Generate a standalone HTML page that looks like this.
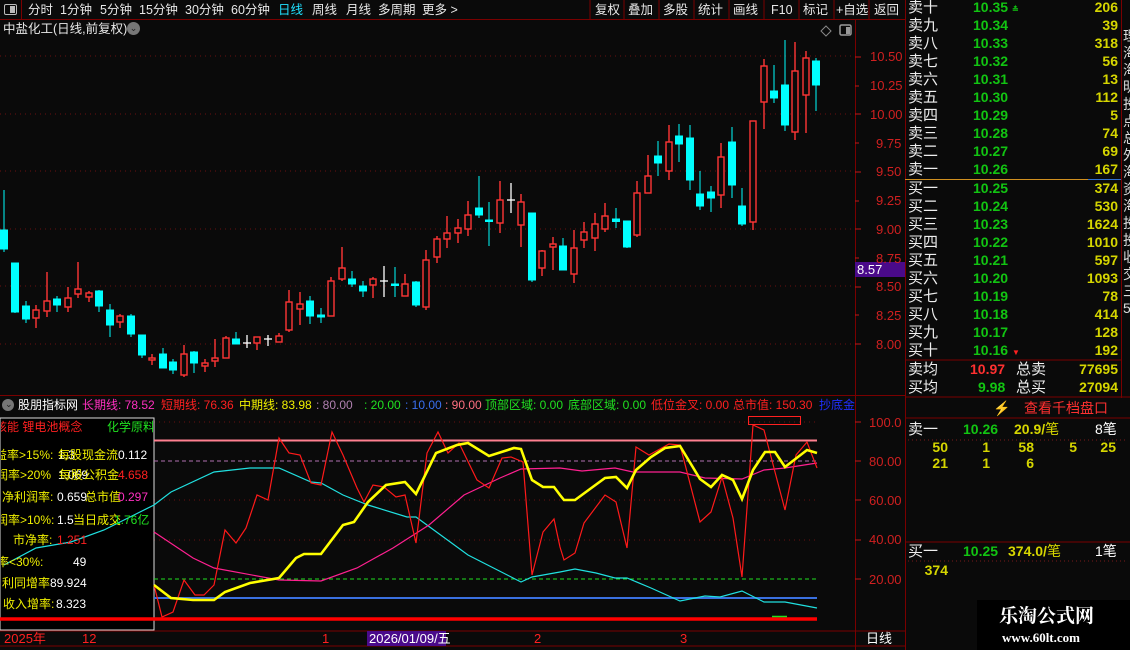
<!DOCTYPE html>
<html><head><meta charset="utf-8"><style>
*{margin:0;padding:0;box-sizing:border-box}
body{width:1130px;height:650px;background:#0a0a0a;overflow:hidden;position:relative;font-family:"Liberation Sans","WenQuanYi Zen Hei","Noto Sans CJK SC",sans-serif;font-size:12px;color:#e8e8e8}
.a{position:absolute;white-space:nowrap;line-height:15px}
.ob{font-size:15px;color:#eee}
.pr{font-weight:bold;color:#12c412;font-size:14px}
.vo{font-weight:bold;color:#d6d600;font-size:14px;text-align:right;width:60px}
.y{color:#f0f000}.w{color:#fff}.r{color:#ff2020}.g{color:#20e020}.m{color:#ff30c0}
.tb{top:3px;font-size:12.5px}
</style></head><body>
<!-- toolbar -->
<div class="a" style="left:0;top:0;width:22px;height:19px;border-right:1px solid #7a0000"></div>
<div class="a" style="left:4px;top:4px;width:13px;height:11px;border:1.5px solid #bbb;border-radius:2px"></div>
<div class="a" style="left:10px;top:6px;width:5px;height:7px;background:#bbb"></div>
<div class="a" style="left:0;top:19px;width:905px;height:1px;background:#7a0000"></div>
<div class="a tb" style="left:28px">分时</div>
<div class="a tb" style="left:60px">1分钟</div>
<div class="a tb" style="left:100px">5分钟</div>
<div class="a tb" style="left:139px">15分钟</div>
<div class="a tb" style="left:185px">30分钟</div>
<div class="a tb" style="left:231px">60分钟</div>
<div class="a tb" style="left:278px;color:#20e0ff">日线</div>
<div class="a tb" style="left:312px">周线</div>
<div class="a tb" style="left:346px">月线</div>
<div class="a tb" style="left:378px">多周期</div>
<div class="a tb" style="left:422px">更多 &gt;</div>
<div class="a tb" style="left:595px">复权</div>
<div class="a tb" style="left:628px">叠加</div>
<div class="a tb" style="left:663px">多股</div>
<div class="a tb" style="left:698px">统计</div>
<div class="a tb" style="left:733px">画线</div>
<div class="a tb" style="left:771px">F10</div>
<div class="a tb" style="left:803px">标记</div>
<div class="a tb" style="left:836px">+自选</div>
<div class="a tb" style="left:874px">返回</div>
<div class="a" style="left:3px;top:22px;font-size:12.5px">中盐化工(日线,前复权)</div>
<div class="a" style="left:127px;top:22px;width:13px;height:13px;border-radius:50%;background:#777;color:#222;font-size:9px;text-align:center;line-height:13px">⌄</div>
<div class="a" style="left:0;top:395px;width:905px;height:1px;background:#7a0000"></div>

<svg class="a" style="left:0;top:0" width="1130" height="650">
<g stroke="#7a0000" stroke-width="1">
<line x1="590" y1="0" x2="590" y2="19"/><line x1="624" y1="0" x2="624" y2="19"/><line x1="659" y1="0" x2="659" y2="19"/><line x1="694" y1="0" x2="694" y2="19"/><line x1="729" y1="0" x2="729" y2="19"/><line x1="764" y1="0" x2="764" y2="19"/><line x1="799" y1="0" x2="799" y2="19"/><line x1="834" y1="0" x2="834" y2="19"/><line x1="869" y1="0" x2="869" y2="19"/>
<line x1="855.5" y1="20" x2="855.5" y2="650"/><line x1="905.5" y1="0" x2="905.5" y2="650"/><line x1="1121.5" y1="0" x2="1121.5" y2="398"/>
<line x1="0" y1="631" x2="905" y2="631"/><line x1="0" y1="646" x2="905" y2="646"/>
<line x1="905" y1="360" x2="1121" y2="360"/><line x1="905" y1="397" x2="1130" y2="397"/>
<line x1="905" y1="418" x2="1130" y2="418"/><line x1="905" y1="542" x2="1130" y2="542"/>
</g>
<line x1="905" y1="179.5" x2="1088" y2="179.5" stroke="#d09020"/><line x1="1088" y1="179.5" x2="1121" y2="179.5" stroke="#3070d0"/>
<g stroke="#7a1a1a" stroke-dasharray="1,3"><line x1="908" y1="440" x2="1125" y2="440"/><line x1="908" y1="561" x2="1125" y2="561"/></g>
<!-- main grid -->
<g stroke="#6a1010" stroke-dasharray="1,4">
<line x1="0" y1="56" x2="855" y2="56"/><line x1="0" y1="114" x2="855" y2="114"/><line x1="0" y1="171" x2="855" y2="171"/><line x1="0" y1="229" x2="855" y2="229"/><line x1="0" y1="286" x2="855" y2="286"/><line x1="0" y1="344" x2="855" y2="344"/>
<line x1="154" y1="422" x2="817" y2="422"/><line x1="154" y1="500" x2="817" y2="500"/><line x1="154" y1="540" x2="817" y2="540"/>
</g>
<g stroke="#c01818"><line x1="855" y1="57" x2="861" y2="57"/><line x1="855" y1="86" x2="859" y2="86"/><line x1="855" y1="114" x2="861" y2="114"/><line x1="855" y1="143" x2="859" y2="143"/><line x1="855" y1="172" x2="861" y2="172"/><line x1="855" y1="201" x2="859" y2="201"/><line x1="855" y1="229" x2="861" y2="229"/><line x1="855" y1="258" x2="859" y2="258"/><line x1="855" y1="287" x2="861" y2="287"/><line x1="855" y1="315" x2="859" y2="315"/><line x1="855" y1="344" x2="861" y2="344"/>
<line x1="855" y1="422" x2="861" y2="422"/><line x1="855" y1="461" x2="861" y2="461"/><line x1="855" y1="500" x2="861" y2="500"/><line x1="855" y1="540" x2="861" y2="540"/><line x1="855" y1="579" x2="861" y2="579"/></g>
<!-- icons -->
<path d="M826 26 L831 31 L826 36 L821 31 Z" fill="none" stroke="#888"/>
<rect x="840" y="25" width="11" height="10" rx="1.5" fill="none" stroke="#999" stroke-width="1.5"/><rect x="846" y="27" width="4" height="7" fill="#999"/>
<!-- cyan candles -->
<g stroke="#00ffff" fill="#00ffff" stroke-width="1">
<line x1="4" y1="190" x2="4" y2="252"/><rect x="0.5" y="230" width="7" height="19"/>
<line x1="15" y1="263" x2="15" y2="313"/><rect x="11.5" y="263" width="7" height="49"/>
<line x1="26" y1="301" x2="26" y2="323"/><rect x="22.5" y="306" width="7" height="13"/>
<line x1="57" y1="296" x2="57" y2="312"/><rect x="53.5" y="299" width="7" height="6"/>
<line x1="99" y1="290" x2="99" y2="312"/><rect x="95.5" y="291" width="7" height="15"/>
<line x1="110" y1="304" x2="110" y2="337"/><rect x="106.5" y="310" width="7" height="15"/>
<line x1="131" y1="314" x2="131" y2="337"/><rect x="127.5" y="316" width="7" height="18"/>
<line x1="142" y1="335" x2="142" y2="358"/><rect x="138.5" y="335" width="7" height="20"/>
<line x1="163" y1="348" x2="163" y2="368"/><rect x="159.5" y="354" width="7" height="14"/>
<line x1="173" y1="359" x2="173" y2="374"/><rect x="169.5" y="362" width="7" height="8"/>
<line x1="194" y1="351" x2="194" y2="373"/><rect x="190.5" y="352" width="7" height="11"/>
<line x1="236" y1="332" x2="236" y2="344"/><rect x="232.5" y="339" width="7" height="5"/>
<line x1="310" y1="296" x2="310" y2="324"/><rect x="306.5" y="301" width="7" height="15"/>
<line x1="321" y1="308" x2="321" y2="323"/><rect x="317.5" y="315" width="7" height="2"/>
<line x1="352" y1="271" x2="352" y2="287"/><rect x="348.5" y="279" width="7" height="5"/>
<line x1="363" y1="281" x2="363" y2="297"/><rect x="359.5" y="286" width="7" height="5"/>
<line x1="395" y1="267" x2="395" y2="297"/><rect x="391.5" y="284" width="7" height="1.5"/>
<line x1="416" y1="281" x2="416" y2="307"/><rect x="412.5" y="282" width="7" height="23"/>
<line x1="479" y1="176" x2="479" y2="218"/><rect x="475.5" y="208" width="7" height="7"/>
<line x1="489" y1="202" x2="489" y2="246"/><rect x="485.5" y="220" width="7" height="1.5"/>
<line x1="532" y1="213" x2="532" y2="282"/><rect x="528.5" y="213" width="7" height="67"/>
<line x1="563" y1="238" x2="563" y2="270"/><rect x="559.5" y="246" width="7" height="24"/>
<line x1="616" y1="208" x2="616" y2="228"/><rect x="612.5" y="219" width="7" height="2.5"/>
<line x1="627" y1="221" x2="627" y2="248"/><rect x="623.5" y="221" width="7" height="26"/>
<line x1="658" y1="141" x2="658" y2="176"/><rect x="654.5" y="156" width="7" height="7"/>
<line x1="679" y1="124" x2="679" y2="162"/><rect x="675.5" y="136" width="7" height="8"/>
<line x1="690" y1="125" x2="690" y2="190"/><rect x="686.5" y="138" width="7" height="42"/>
<line x1="700" y1="171" x2="700" y2="210"/><rect x="696.5" y="194" width="7" height="12"/>
<line x1="711" y1="186" x2="711" y2="212"/><rect x="707.5" y="192" width="7" height="6"/>
<line x1="732" y1="127" x2="732" y2="198"/><rect x="728.5" y="142" width="7" height="43"/>
<line x1="742" y1="188" x2="742" y2="226"/><rect x="738.5" y="206" width="7" height="18"/>
<line x1="774" y1="65" x2="774" y2="103"/><rect x="770.5" y="91" width="7" height="7"/>
<line x1="785" y1="40" x2="785" y2="131"/><rect x="781.5" y="85" width="7" height="40"/>
<line x1="816" y1="58" x2="816" y2="111"/><rect x="812.5" y="61" width="7" height="24"/>
</g>
<!-- red candles -->
<g stroke="#ff3535" fill="#0a0a0a" stroke-width="1.4">
<line x1="36" y1="305" x2="36" y2="328"/><rect x="33" y="310" width="6" height="8"/>
<line x1="47" y1="272" x2="47" y2="317"/><rect x="44" y="301" width="6" height="10"/>
<line x1="68" y1="287" x2="68" y2="312"/><rect x="65" y="298" width="6" height="9"/>
<line x1="78" y1="262" x2="78" y2="298"/><rect x="75" y="289" width="6" height="5"/>
<line x1="89" y1="291" x2="89" y2="302"/><rect x="86" y="293" width="6" height="4"/>
<line x1="120" y1="314" x2="120" y2="328"/><rect x="117" y="316" width="6" height="6"/>
<line x1="152" y1="354" x2="152" y2="365"/><rect x="149" y="358" width="6" height="2"/>
<line x1="184" y1="345" x2="184" y2="377"/><rect x="181" y="354" width="6" height="21"/>
<line x1="205" y1="359" x2="205" y2="372"/><rect x="202" y="363" width="6" height="3"/>
<line x1="215" y1="339" x2="215" y2="367"/><rect x="212" y="358" width="6" height="3"/>
<line x1="226" y1="336" x2="226" y2="358"/><rect x="223" y="338" width="6" height="20"/>
<line x1="257" y1="337" x2="257" y2="350"/><rect x="254" y="337" width="6" height="6"/>
<line x1="279" y1="333" x2="279" y2="342"/><rect x="276" y="336" width="6" height="6"/>
<line x1="289" y1="290" x2="289" y2="332"/><rect x="286" y="302" width="6" height="28"/>
<line x1="300" y1="292" x2="300" y2="325"/><rect x="297" y="304" width="6" height="5"/>
<line x1="331" y1="277" x2="331" y2="316"/><rect x="328" y="281" width="6" height="35"/>
<line x1="342" y1="247" x2="342" y2="281"/><rect x="339" y="268" width="6" height="11"/>
<line x1="373" y1="277" x2="373" y2="298"/><rect x="370" y="279" width="6" height="6"/>
<line x1="405" y1="274" x2="405" y2="296"/><rect x="402" y="284" width="6" height="12"/>
<line x1="426" y1="250" x2="426" y2="310"/><rect x="423" y="260" width="6" height="47"/>
<line x1="437" y1="236" x2="437" y2="263"/><rect x="434" y="239" width="6" height="18"/>
<line x1="447" y1="216" x2="447" y2="248"/><rect x="444" y="233" width="6" height="6"/>
<line x1="458" y1="219" x2="458" y2="243"/><rect x="455" y="228" width="6" height="5"/>
<line x1="468" y1="201" x2="468" y2="236"/><rect x="465" y="215" width="6" height="14"/>
<line x1="500" y1="181" x2="500" y2="233"/><rect x="497" y="200" width="6" height="23"/>
<line x1="521" y1="194" x2="521" y2="247"/><rect x="518" y="202" width="6" height="23"/>
<line x1="542" y1="250" x2="542" y2="276"/><rect x="539" y="251" width="6" height="17"/>
<line x1="553" y1="237" x2="553" y2="270"/><rect x="550" y="244" width="6" height="3"/>
<line x1="574" y1="230" x2="574" y2="283"/><rect x="571" y="248" width="6" height="26"/>
<line x1="584" y1="222" x2="584" y2="248"/><rect x="581" y="232" width="6" height="8"/>
<line x1="595" y1="213" x2="595" y2="251"/><rect x="592" y="224" width="6" height="14"/>
<line x1="605" y1="203" x2="605" y2="232"/><rect x="602" y="216" width="6" height="13"/>
<line x1="637" y1="181" x2="637" y2="237"/><rect x="634" y="193" width="6" height="42"/>
<line x1="648" y1="155" x2="648" y2="193"/><rect x="645" y="176" width="6" height="17"/>
<line x1="669" y1="125" x2="669" y2="180"/><rect x="666" y="142" width="6" height="29"/>
<line x1="721" y1="143" x2="721" y2="208"/><rect x="718" y="157" width="6" height="38"/>
<line x1="753" y1="121" x2="753" y2="230"/><rect x="750" y="121" width="6" height="101"/>
<line x1="764" y1="59" x2="764" y2="129"/><rect x="761" y="66" width="6" height="36"/>
<line x1="795" y1="42" x2="795" y2="140"/><rect x="792" y="71" width="6" height="61"/>
<line x1="806" y1="51" x2="806" y2="133"/><rect x="803" y="58" width="6" height="37"/>
</g>
<g stroke="#fff" stroke-width="1.3">
<line x1="247" y1="335" x2="247" y2="348"/><line x1="243" y1="343" x2="251" y2="343"/>
<line x1="268" y1="335" x2="268" y2="346"/><line x1="264" y1="339" x2="272" y2="339"/>
<line x1="384" y1="266" x2="384" y2="297"/><line x1="380" y1="281" x2="388" y2="281"/>
<line x1="511" y1="183" x2="511" y2="213"/><line x1="507" y1="200" x2="515" y2="200"/>
</g>
<rect x="855" y="262" width="50" height="15" fill="#4a0a8a"/>
<!-- indicator -->
<rect x="0" y="418" width="154" height="212" fill="#000" stroke="#ddd" stroke-width="1"/>
<line x1="154" y1="440.5" x2="817" y2="440.5" stroke="#ff8090" stroke-width="2"/>
<line x1="154" y1="461" x2="817" y2="461" stroke="#b070b0" stroke-dasharray="4,3"/>
<line x1="154" y1="579" x2="817" y2="579" stroke="#20e020" stroke-dasharray="4,3"/>
<line x1="154" y1="598" x2="817" y2="598" stroke="#3a70e0" stroke-width="2"/>
<polyline fill="none" stroke="#20e0e0" stroke-width="1.2" points="4,565 36,548 71,542 104,530 154,505 171,492 214,472 250,468 279,468 311,482 321,483 343,495 368,505 407,517 416,517 468,555 521,582 532,577 560,572 575,569 596,573 615,578 627,578 651,588 680,601 705,596 720,597 742,591 764,602 785,602 817,608"/>
<polyline fill="none" stroke="#ff2090" stroke-width="1.2" points="154,532 193,558 214,568 279,580 321,581 357,568 393,548 429,525 464,495 500,478 521,469 560,468 582,471 615,468 633,472 680,472 705,478 742,479 764,470 785,468 817,463"/>
<polyline fill="none" stroke="#ff1a1a" stroke-width="1.2" points="154,585 162,617 173,612 184,580 195,595 204,595 214,585 225,530 236,543 246,528 257,495 268,500 279,438 289,453 300,455 311,483 321,485 332,432 343,455 357,488 364,502 373,485 384,487 396,497 405,495 416,543 427,453 438,432 448,453 459,443 477,480 489,488 502,458 511,457 523,462 532,575 543,532 554,519 560,547 564,560 575,553 584,523 605,495 616,502 627,548 636,447 649,455 669,444 680,445 700,522 711,512 722,477 733,518 742,577 753,425 764,430 775,472 785,510 796,455 807,442 817,468"/>
<polyline fill="none" stroke="#ffff00" stroke-width="2.6" points="154,585 171,598 193,600 214,600 225,592 250,583 279,578 296,558 304,554 321,554 343,525 354,522 368,502 386,485 405,482 416,494 436,453 457,445 468,443 489,456 514,448 521,449 532,480 543,487 554,487 560,495 564,500 575,500 605,478 616,477 627,488 636,470 651,457 665,448 680,446 700,479 711,487 722,475 733,480 742,499 753,470 765,452 775,452 785,467 807,450 817,453"/>
<rect x="748.5" y="416.5" width="52" height="8" fill="none" stroke="#ff2020"/>
<line x1="0" y1="619" x2="817" y2="619" stroke="#ff0000" stroke-width="3.5"/>
<line x1="772" y1="616.5" x2="787" y2="616.5" stroke="#20e020" stroke-width="1.5"/>
<circle cx="8" cy="405" r="6" fill="#777"/>
<rect x="367" y="631" width="79" height="15" fill="#4a0a8a"/>
<rect x="977" y="600" width="153" height="50" fill="#000"/>
</svg>

<!-- axis labels -->
<div class="a" style="left:870px;top:49px;color:#d02020;font-size:13px">10.50</div>
<div class="a" style="left:870px;top:78px;color:#d02020;font-size:13px">10.25</div>
<div class="a" style="left:870px;top:107px;color:#d02020;font-size:13px">10.00</div>
<div class="a" style="left:876px;top:136px;color:#d02020;font-size:13px">9.75</div>
<div class="a" style="left:876px;top:164px;color:#d02020;font-size:13px">9.50</div>
<div class="a" style="left:876px;top:193px;color:#d02020;font-size:13px">9.25</div>
<div class="a" style="left:876px;top:222px;color:#d02020;font-size:13px">9.00</div>
<div class="a" style="left:876px;top:251px;color:#d02020;font-size:13px">8.75</div>
<div class="a" style="left:857px;top:262px;color:#fff;font-size:13px">8.57</div>
<div class="a" style="left:876px;top:279px;color:#d02020;font-size:13px">8.50</div>
<div class="a" style="left:876px;top:308px;color:#d02020;font-size:13px">8.25</div>
<div class="a" style="left:876px;top:337px;color:#d02020;font-size:13px">8.00</div>
<div class="a" style="left:869px;top:415px;color:#d02020;font-size:13px">100.0</div>
<div class="a" style="left:869px;top:454px;color:#d02020;font-size:13px">80.00</div>
<div class="a" style="left:869px;top:493px;color:#d02020;font-size:13px">60.00</div>
<div class="a" style="left:869px;top:532px;color:#d02020;font-size:13px">40.00</div>
<div class="a" style="left:869px;top:572px;color:#d02020;font-size:13px">20.00</div>
<!-- indicator header -->
<div class="a" style="left:5px;top:397px;color:#222;font-size:9px">⌄</div>
<div class="a" style="left:18px;top:398px;color:#fff">股朋指标网</div>
<div class="a m" style="left:82px;top:398px">长期线: 78.52</div>
<div class="a r" style="left:161px;top:398px">短期线: 76.36</div>
<div class="a y" style="left:239px;top:398px">中期线: 83.98</div>
<div class="a" style="left:316px;top:398px;color:#b080b0">: 80.00</div>
<div class="a g" style="left:364px;top:398px">: 20.00</div>
<div class="a" style="left:405px;top:398px;color:#3a70f0">: 10.00</div>
<div class="a" style="left:445px;top:398px;color:#ff7080">: 90.00</div>
<div class="a g" style="left:485px;top:398px">顶部区域: 0.00</div>
<div class="a g" style="left:568px;top:398px">底部区域: 0.00</div>
<div class="a r" style="left:651px;top:398px">低位金叉: 0.00</div>
<div class="a r" style="left:733px;top:398px">总市值: 150.30</div>
<div class="a" style="left:819px;top:398px;color:#2030ff;width:36px;overflow:hidden">抄底金</div>
<!-- info box -->
<div class="a" style="left:1px;top:418px;width:152px;height:211px;overflow:hidden">
<div class="a r" style="left:-6px;top:2px">核能 锂电池概念</div>
<div class="a g" style="left:106px;top:2px">化学原料</div>
<div class="a y" style="left:-6px;top:30px">益率&gt;15%:</div><div class="a w" style="left:57px;top:30px">1.3</div><div class="a y" style="left:57px;top:30px">每股现金流</div><div class="a w" style="left:117px;top:30px">0.112</div>
<div class="a y" style="left:-5px;top:50px">润率&gt;20%</div><div class="a w" style="left:57px;top:50px">1.069</div><div class="a y" style="left:58px;top:50px">每股公积金</div><div class="a r" style="left:117px;top:50px">4.658</div>
<div class="a y" style="left:1px;top:72px">净利润率:</div><div class="a w" style="left:56px;top:72px">0.659</div><div class="a y" style="left:84px;top:72px">总市值</div><div class="a m" style="left:117px;top:72px">0.297</div>
<div class="a y" style="left:-5px;top:95px">润率&gt;10%:</div><div class="a w" style="left:56px;top:95px">1.5</div><div class="a y" style="left:72px;top:95px">当日成交</div><div class="a g" style="left:113px;top:95px">1.76亿</div>
<div class="a y" style="left:12px;top:115px">市净率:</div><div class="a r" style="left:56px;top:115px">1.251</div>
<div class="a y" style="left:-4px;top:137px">率&lt;30%:</div><div class="a w" style="left:72px;top:137px">49</div>
<div class="a y" style="left:1px;top:158px">利同增率</div><div class="a w" style="left:49px;top:158px">89.924</div>
<div class="a y" style="left:2px;top:179px">收入增率:</div><div class="a w" style="left:55px;top:179px">8.323</div>
</div>
<!-- date bar -->
<div class="a r" style="left:4px;top:631px;font-size:13px">2025年</div>
<div class="a r" style="left:82px;top:631px;font-size:13px">12</div>
<div class="a r" style="left:322px;top:631px;font-size:13px">1</div>
<div class="a" style="left:369px;top:631px;color:#fff;font-size:13px">2026/01/09/五</div>
<div class="a r" style="left:534px;top:631px;font-size:13px">2</div>
<div class="a r" style="left:680px;top:631px;font-size:13px">3</div>
<div class="a" style="left:866px;top:631px;color:#fff;font-size:13px">日线</div>
<!-- order book -->
<div class="a" style="left:908px;top:0;width:212px">
<div class="a ob" style="left:0;top:0">卖十</div><div class="a pr" style="left:65px;top:0">10.35 <span style="font-size:8px">≛</span></div><div class="a vo" style="left:150px;top:0">206</div>
<div class="a ob" style="left:0;top:18px">卖九</div><div class="a pr" style="left:65px;top:18px">10.34</div><div class="a vo" style="left:150px;top:18px">39</div>
<div class="a ob" style="left:0;top:36px">卖八</div><div class="a pr" style="left:65px;top:36px">10.33</div><div class="a vo" style="left:150px;top:36px">318</div>
<div class="a ob" style="left:0;top:54px">卖七</div><div class="a pr" style="left:65px;top:54px">10.32</div><div class="a vo" style="left:150px;top:54px">56</div>
<div class="a ob" style="left:0;top:72px">卖六</div><div class="a pr" style="left:65px;top:72px">10.31</div><div class="a vo" style="left:150px;top:72px">13</div>
<div class="a ob" style="left:0;top:90px">卖五</div><div class="a pr" style="left:65px;top:90px">10.30</div><div class="a vo" style="left:150px;top:90px">112</div>
<div class="a ob" style="left:0;top:108px">卖四</div><div class="a pr" style="left:65px;top:108px">10.29</div><div class="a vo" style="left:150px;top:108px">5</div>
<div class="a ob" style="left:0;top:126px">卖三</div><div class="a pr" style="left:65px;top:126px">10.28</div><div class="a vo" style="left:150px;top:126px">74</div>
<div class="a ob" style="left:0;top:144px">卖二</div><div class="a pr" style="left:65px;top:144px">10.27</div><div class="a vo" style="left:150px;top:144px">69</div>
<div class="a ob" style="left:0;top:162px">卖一</div><div class="a pr" style="left:65px;top:162px">10.26</div><div class="a vo" style="left:150px;top:162px">167</div>
<div class="a ob" style="left:0;top:181px">买一</div><div class="a pr" style="left:65px;top:181px">10.25</div><div class="a vo" style="left:150px;top:181px">374</div>
<div class="a ob" style="left:0;top:199px">买二</div><div class="a pr" style="left:65px;top:199px">10.24</div><div class="a vo" style="left:150px;top:199px">530</div>
<div class="a ob" style="left:0;top:217px">买三</div><div class="a pr" style="left:65px;top:217px">10.23</div><div class="a vo" style="left:150px;top:217px">1624</div>
<div class="a ob" style="left:0;top:235px">买四</div><div class="a pr" style="left:65px;top:235px">10.22</div><div class="a vo" style="left:150px;top:235px">1010</div>
<div class="a ob" style="left:0;top:253px">买五</div><div class="a pr" style="left:65px;top:253px">10.21</div><div class="a vo" style="left:150px;top:253px">597</div>
<div class="a ob" style="left:0;top:271px">买六</div><div class="a pr" style="left:65px;top:271px">10.20</div><div class="a vo" style="left:150px;top:271px">1093</div>
<div class="a ob" style="left:0;top:289px">买七</div><div class="a pr" style="left:65px;top:289px">10.19</div><div class="a vo" style="left:150px;top:289px">78</div>
<div class="a ob" style="left:0;top:307px">买八</div><div class="a pr" style="left:65px;top:307px">10.18</div><div class="a vo" style="left:150px;top:307px">414</div>
<div class="a ob" style="left:0;top:325px">买九</div><div class="a pr" style="left:65px;top:325px">10.17</div><div class="a vo" style="left:150px;top:325px">128</div>
<div class="a ob" style="left:0;top:343px">买十</div><div class="a pr" style="left:65px;top:343px">10.16 <span style="color:#ff2020;font-size:8px">▼</span></div><div class="a vo" style="left:150px;top:343px">192</div>
<div class="a ob" style="left:0;top:362px">卖均</div><div class="a pr" style="left:62px;top:362px;color:#ff3030">10.97</div><div class="a ob" style="left:108px;top:362px">总卖</div><div class="a vo" style="left:150px;top:362px">77695</div>
<div class="a ob" style="left:0;top:380px">买均</div><div class="a pr" style="left:70px;top:380px">9.98</div><div class="a ob" style="left:108px;top:380px">总买</div><div class="a vo" style="left:150px;top:380px">27094</div>
</div>
<div class="a" style="left:1123px;top:28px;width:7px;overflow:hidden;color:#ddd;font-size:14px;line-height:17px;white-space:normal">理<br>海<br>海<br>明<br>投<br>点<br>总<br>外<br>海<br>资<br>海<br>投<br>投<br>收<br>交<br>三<br>5</div>
<!-- lower right panel -->
<div class="a" style="left:993px;top:401px;color:#a08020;font-size:14px">⚡</div>
<div class="a" style="left:1024px;top:401px;color:#ff3030;font-size:14px">查看千档盘口</div>
<div class="a ob" style="left:908px;top:422px">卖一</div>
<div class="a pr" style="left:963px;top:422px">10.26</div>
<div class="a" style="left:1014px;top:422px;color:#d6d600;font-weight:bold;font-size:14px">20.9/<span style="font-weight:normal">笔</span></div>
<div class="a" style="left:1095px;top:422px;color:#fff;font-size:14px">8笔</div>
<div class="a vo" style="left:888px;top:440px;width:60px">50</div><div class="a vo" style="left:930px;top:440px;width:60px">1</div><div class="a vo" style="left:974px;top:440px;width:60px">58</div><div class="a vo" style="left:1017px;top:440px;width:60px">5</div><div class="a vo" style="left:1056px;top:440px;width:60px">25</div>
<div class="a vo" style="left:888px;top:456px;width:60px">21</div><div class="a vo" style="left:930px;top:456px;width:60px">1</div><div class="a vo" style="left:974px;top:456px;width:60px">6</div>
<div class="a ob" style="left:908px;top:544px">买一</div>
<div class="a pr" style="left:963px;top:544px">10.25</div>
<div class="a" style="left:1008px;top:544px;color:#d6d600;font-weight:bold;font-size:14px">374.0/<span style="font-weight:normal">笔</span></div>
<div class="a" style="left:1095px;top:544px;color:#fff;font-size:14px">1笔</div>
<div class="a vo" style="left:888px;top:563px;width:60px">374</div>
<div class="a" style="left:999px;top:606px;color:#fff;font-family:'Liberation Serif','Noto Serif CJK SC',serif;font-weight:bold;font-size:19px;line-height:22px">乐淘公式网</div>
<div class="a" style="left:1002px;top:630px;color:#fff;font-family:'Liberation Serif',serif;font-weight:bold;font-size:13px">www.60lt.com</div>
</body></html>
